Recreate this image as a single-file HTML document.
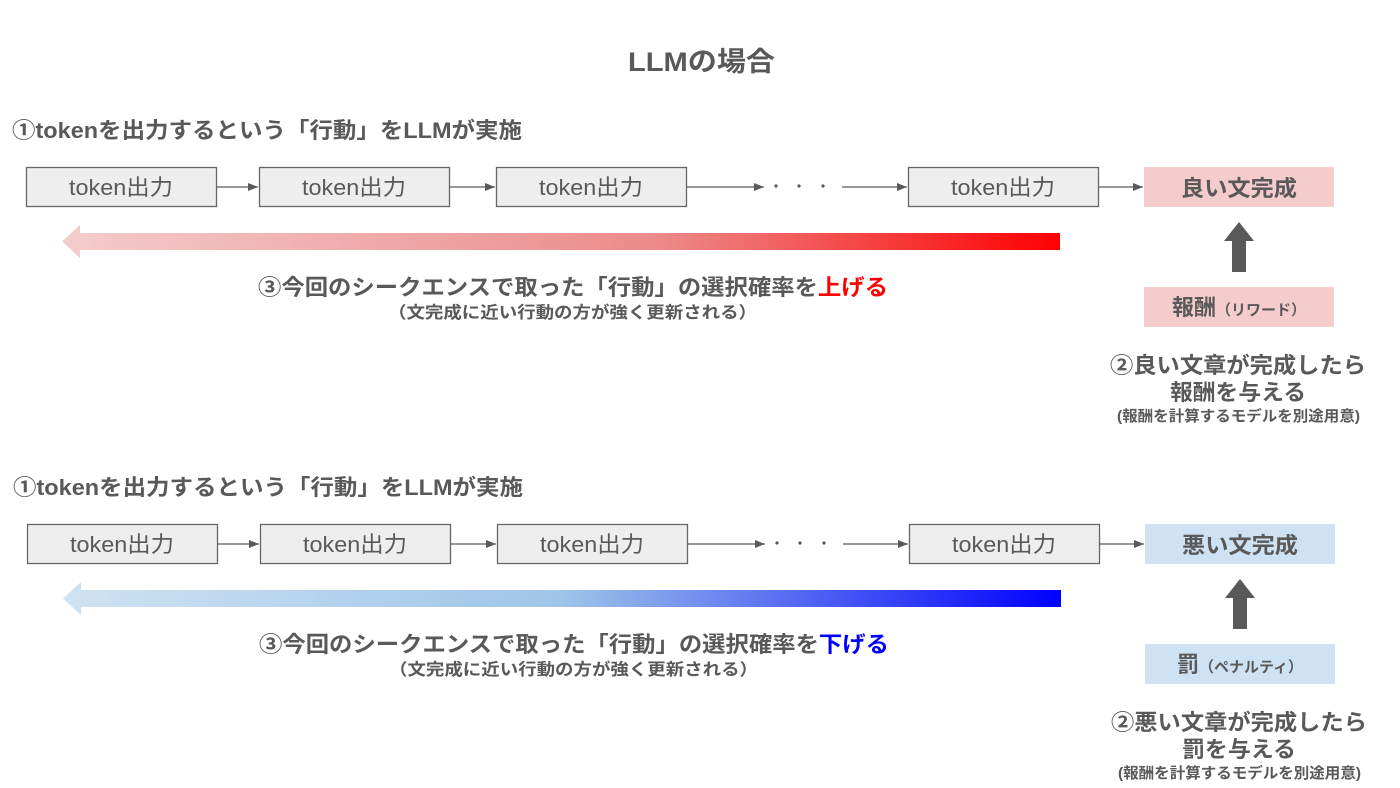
<!DOCTYPE html><html><head><meta charset="utf-8"><style>
body{margin:0;background:#fff}
svg{display:block}
text{font-family:"Liberation Sans","Noto Sans CJK JP",sans-serif;fill:#595959}
.b{font-weight:bold}
</style></head><body>
<svg width="1400" height="788" viewBox="0 0 1400 788">
<defs>
<marker id="ah" markerWidth="10" markerHeight="8" refX="10" refY="4" orient="auto" markerUnits="userSpaceOnUse"><path d="M0,0 L10,4 L0,8 z" fill="#595959"/></marker>
<linearGradient id="gr" x1="0" x2="1"><stop offset="0" stop-color="#f4cccc"/><stop offset="0.6" stop-color="#ec8a8a"/><stop offset="1" stop-color="#ff0000"/></linearGradient>
<linearGradient id="gb" x1="0" x2="1"><stop offset="0" stop-color="#cfe2f3"/><stop offset="0.5" stop-color="#9fc5e8"/><stop offset="1" stop-color="#0000ff"/></linearGradient>
</defs>
<text x="628" y="71" class="b" font-size="27" textLength="147" lengthAdjust="spacingAndGlyphs">LLMの場合</text>

<g id="top">
<text x="12" y="138" class="b" font-size="22" textLength="510" lengthAdjust="spacingAndGlyphs">①tokenを出力するという「行動」をLLMが実施</text>
<g fill="#eeeeee" stroke="#666" stroke-width="1.3">
<rect x="26.5" y="167.5" width="190" height="39"/>
<rect x="259.5" y="167.5" width="190" height="39"/>
<rect x="496.5" y="167.5" width="190" height="39"/>
<rect x="908.5" y="167.5" width="190" height="39"/>
</g>
<g font-size="22" text-anchor="middle">
<text x="121" y="195" textLength="104" lengthAdjust="spacingAndGlyphs">token出力</text><text x="354" y="195" textLength="104" lengthAdjust="spacingAndGlyphs">token出力</text><text x="591" y="195" textLength="104" lengthAdjust="spacingAndGlyphs">token出力</text><text x="1003" y="195" textLength="104" lengthAdjust="spacingAndGlyphs">token出力</text>
</g>
<g stroke="#595959" stroke-width="1.3" marker-end="url(#ah)">
<line x1="217" y1="187" x2="258" y2="187"/><line x1="450" y1="187" x2="495" y2="187"/>
<line x1="687" y1="187" x2="764" y2="187"/><line x1="842" y1="187" x2="907" y2="187"/>
<line x1="1099" y1="187" x2="1143" y2="187"/>
</g>
<g fill="#595959"><circle cx="776" cy="186" r="1.6"/><circle cx="799" cy="186" r="1.6"/><circle cx="823" cy="186" r="1.6"/></g>
<rect x="1144" y="167" width="190" height="40" fill="#f4cccc"/>
<text x="1181" y="196" class="b" font-size="22" textLength="116" lengthAdjust="spacingAndGlyphs">良い文完成</text>
<path d="M1232,272 V241 H1224 L1239,222 L1254,241 H1246 V272 z" fill="#595959"/>
<rect x="1144" y="287" width="190" height="40" fill="#f4cccc"/>
<text x="1239" y="315" text-anchor="middle" class="b" font-size="22">報酬<tspan font-size="15">（リワード）</tspan></text>
<text x="1110" y="373" class="b" font-size="22" textLength="256" lengthAdjust="spacingAndGlyphs">②良い文章が完成したら</text>
<text x="1170" y="400" class="b" font-size="22" textLength="136" lengthAdjust="spacingAndGlyphs">報酬を与える</text>
<text x="1117" y="421" class="b" font-size="15" textLength="243" lengthAdjust="spacingAndGlyphs">(報酬を計算するモデルを別途用意)</text>
<path d="M80,233 H1060 V250 H80 V258 L62,241.5 L80,225 z" fill="url(#gr)"/>
<text x="258" y="295" class="b" font-size="22" textLength="630" lengthAdjust="spacingAndGlyphs">③今回のシークエンスで取った「行動」の選択確率を<tspan style="fill:#ff0000">上げる</tspan></text>
<text x="388" y="318" class="b" font-size="16.5" textLength="369" lengthAdjust="spacingAndGlyphs">（文完成に近い行動の方が強く更新される）</text>
</g>

<g transform="translate(1,357)">
<text x="12" y="138" class="b" font-size="22" textLength="510" lengthAdjust="spacingAndGlyphs">①tokenを出力するという「行動」をLLMが実施</text>
<g fill="#eeeeee" stroke="#666" stroke-width="1.3">
<rect x="26.5" y="167.5" width="190" height="39"/>
<rect x="259.5" y="167.5" width="190" height="39"/>
<rect x="496.5" y="167.5" width="190" height="39"/>
<rect x="908.5" y="167.5" width="190" height="39"/>
</g>
<g font-size="22" text-anchor="middle">
<text x="121" y="195" textLength="104" lengthAdjust="spacingAndGlyphs">token出力</text><text x="354" y="195" textLength="104" lengthAdjust="spacingAndGlyphs">token出力</text><text x="591" y="195" textLength="104" lengthAdjust="spacingAndGlyphs">token出力</text><text x="1003" y="195" textLength="104" lengthAdjust="spacingAndGlyphs">token出力</text>
</g>
<g stroke="#595959" stroke-width="1.3" marker-end="url(#ah)">
<line x1="217" y1="187" x2="258" y2="187"/><line x1="450" y1="187" x2="495" y2="187"/>
<line x1="687" y1="187" x2="764" y2="187"/><line x1="842" y1="187" x2="907" y2="187"/>
<line x1="1099" y1="187" x2="1143" y2="187"/>
</g>
<g fill="#595959"><circle cx="776" cy="186" r="1.6"/><circle cx="799" cy="186" r="1.6"/><circle cx="823" cy="186" r="1.6"/></g>
<rect x="1144" y="167" width="190" height="40" fill="#cfe2f3"/>
<text x="1181" y="196" class="b" font-size="22" textLength="116" lengthAdjust="spacingAndGlyphs">悪い文完成</text>
<path d="M1232,272 V241 H1224 L1239,222 L1254,241 H1246 V272 z" fill="#595959"/>
<rect x="1144" y="287" width="190" height="40" fill="#cfe2f3"/>
<text x="1239" y="315" text-anchor="middle" class="b" font-size="22">罰<tspan font-size="15">（ペナルティ）</tspan></text>
<text x="1110" y="373" class="b" font-size="22" textLength="256" lengthAdjust="spacingAndGlyphs">②悪い文章が完成したら</text>
<text x="1181" y="400" class="b" font-size="22" textLength="114" lengthAdjust="spacingAndGlyphs">罰を与える</text>
<text x="1117" y="421" class="b" font-size="15" textLength="243" lengthAdjust="spacingAndGlyphs">(報酬を計算するモデルを別途用意)</text>
<path d="M80,233 H1060 V250 H80 V258 L62,241.5 L80,225 z" fill="url(#gb)"/>
<text x="258" y="295" class="b" font-size="22" textLength="630" lengthAdjust="spacingAndGlyphs">③今回のシークエンスで取った「行動」の選択確率を<tspan style="fill:#0000ff">下げる</tspan></text>
<text x="388" y="318" class="b" font-size="16.5" textLength="369" lengthAdjust="spacingAndGlyphs">（文完成に近い行動の方が強く更新される）</text>
</g>
</svg>
</body></html>
